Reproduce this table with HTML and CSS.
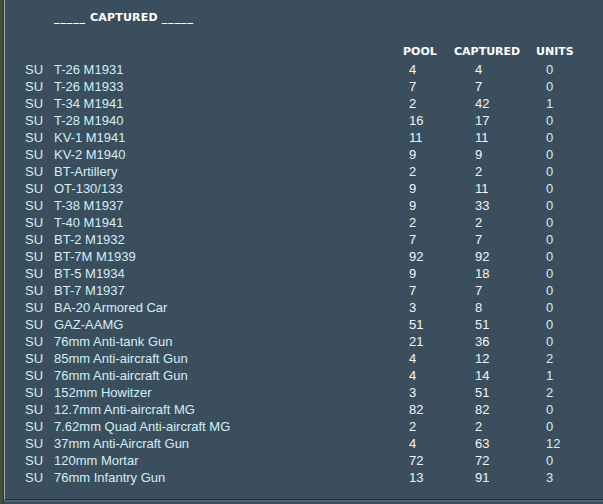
FILE: index.html
```html
<!DOCTYPE html>
<html>
<head>
<meta charset="utf-8">
<link rel="stylesheet" href="styles.css">
</head>
<body>
<div class="frame">
  <div class="edge"></div>
  <div class="panel">
    <div class="title"><span class="rule">_____</span> CAPTURED <span class="rule">_____</span></div>
    <div class="table">
      <div class="row head">
        <span></span><span></span>
        <span class="h">POOL</span><span class="h">CAPTURED</span><span class="h">UNITS</span>
      </div>
      <div class="row"><span class="c">SU</span><span class="c">T-26 M1931</span><span class="n p">4</span><span class="n q">4</span><span class="n u">0</span></div>
      <div class="row"><span class="c">SU</span><span class="c">T-26 M1933</span><span class="n p">7</span><span class="n q">7</span><span class="n u">0</span></div>
      <div class="row"><span class="c">SU</span><span class="c">T-34 M1941</span><span class="n p">2</span><span class="n q">42</span><span class="n u">1</span></div>
      <div class="row"><span class="c">SU</span><span class="c">T-28 M1940</span><span class="n p">16</span><span class="n q">17</span><span class="n u">0</span></div>
      <div class="row"><span class="c">SU</span><span class="c">KV-1 M1941</span><span class="n p">11</span><span class="n q">11</span><span class="n u">0</span></div>
      <div class="row"><span class="c">SU</span><span class="c">KV-2 M1940</span><span class="n p">9</span><span class="n q">9</span><span class="n u">0</span></div>
      <div class="row"><span class="c">SU</span><span class="c">BT-Artillery</span><span class="n p">2</span><span class="n q">2</span><span class="n u">0</span></div>
      <div class="row"><span class="c">SU</span><span class="c">OT-130/133</span><span class="n p">9</span><span class="n q">11</span><span class="n u">0</span></div>
      <div class="row"><span class="c">SU</span><span class="c">T-38 M1937</span><span class="n p">9</span><span class="n q">33</span><span class="n u">0</span></div>
      <div class="row"><span class="c">SU</span><span class="c">T-40 M1941</span><span class="n p">2</span><span class="n q">2</span><span class="n u">0</span></div>
      <div class="row"><span class="c">SU</span><span class="c">BT-2 M1932</span><span class="n p">7</span><span class="n q">7</span><span class="n u">0</span></div>
      <div class="row"><span class="c">SU</span><span class="c">BT-7M M1939</span><span class="n p">92</span><span class="n q">92</span><span class="n u">0</span></div>
      <div class="row"><span class="c">SU</span><span class="c">BT-5 M1934</span><span class="n p">9</span><span class="n q">18</span><span class="n u">0</span></div>
      <div class="row"><span class="c">SU</span><span class="c">BT-7 M1937</span><span class="n p">7</span><span class="n q">7</span><span class="n u">0</span></div>
      <div class="row"><span class="c">SU</span><span class="c">BA-20 Armored Car</span><span class="n p">3</span><span class="n q">8</span><span class="n u">0</span></div>
      <div class="row"><span class="c">SU</span><span class="c">GAZ-AAMG</span><span class="n p">51</span><span class="n q">51</span><span class="n u">0</span></div>
      <div class="row"><span class="c">SU</span><span class="c">76mm Anti-tank Gun</span><span class="n p">21</span><span class="n q">36</span><span class="n u">0</span></div>
      <div class="row"><span class="c">SU</span><span class="c">85mm Anti-aircraft Gun</span><span class="n p">4</span><span class="n q">12</span><span class="n u">2</span></div>
      <div class="row"><span class="c">SU</span><span class="c">76mm Anti-aircraft Gun</span><span class="n p">4</span><span class="n q">14</span><span class="n u">1</span></div>
      <div class="row"><span class="c">SU</span><span class="c">152mm Howitzer</span><span class="n p">3</span><span class="n q">51</span><span class="n u">2</span></div>
      <div class="row"><span class="c">SU</span><span class="c">12.7mm Anti-aircraft MG</span><span class="n p">82</span><span class="n q">82</span><span class="n u">0</span></div>
      <div class="row"><span class="c">SU</span><span class="c">7.62mm Quad Anti-aircraft MG</span><span class="n p">2</span><span class="n q">2</span><span class="n u">0</span></div>
      <div class="row"><span class="c">SU</span><span class="c">37mm Anti-Aircraft Gun</span><span class="n p">4</span><span class="n q">63</span><span class="n u">12</span></div>
      <div class="row"><span class="c">SU</span><span class="c">120mm Mortar</span><span class="n p">72</span><span class="n q">72</span><span class="n u">0</span></div>
      <div class="row"><span class="c">SU</span><span class="c">76mm Infantry Gun</span><span class="n p">13</span><span class="n q">91</span><span class="n u">3</span></div>
    </div>
  </div>
</div>
</body>
</html>
```
FILE: styles.css
```css
html, body {
  margin: 0;
  padding: 0;
  background: #3b4e5d;
}
.frame {
  display: flex;
  width: 603px;
  height: 504px;
  overflow: hidden;
}
.edge {
  width: 3px;
  flex: none;
  background: #44513a;
  border-right: 1px solid #26323c;
}
.panel {
  flex: 1;
  border-left: 1px solid #a9b3bb;
  height: 500px;
  border-bottom: 1px solid #222c35;
  box-shadow: 0 2px 0 #4f6270;
  background: #3b4e5d;
  padding-left: 20px;
  box-sizing: border-box;
}
.title {
  font-family: "DejaVu Sans", sans-serif;
  font-weight: bold;
  font-size: 11px;
  color: #ffffff;
  line-height: 17px;
  padding-top: 9px;
  padding-left: 29px;
  letter-spacing: 0.2px;
}
.rule {
  letter-spacing: 0.9px;
}
.table {
  padding-top: 16px;
}
.row {
  display: grid;
  grid-template-columns: 29px 349px 51px 82px 60px;
  height: 17px;
  line-height: 17px;
  font-family: "Liberation Sans", sans-serif;
  font-size: 13px;
  white-space: nowrap;
}
.head {
  height: 19px;
  line-height: 19px;
}
.h {
  font-family: "DejaVu Sans", sans-serif;
  font-weight: bold;
  font-size: 11px;
  color: #ffffff;
}
.c {
  color: #d0eff6;
}
.n {
  color: #f2f6f8;
}
.p { padding-left: 6px; }
.q { padding-left: 21px; }
.u { padding-left: 10px; color: #d0eff6; }
```
